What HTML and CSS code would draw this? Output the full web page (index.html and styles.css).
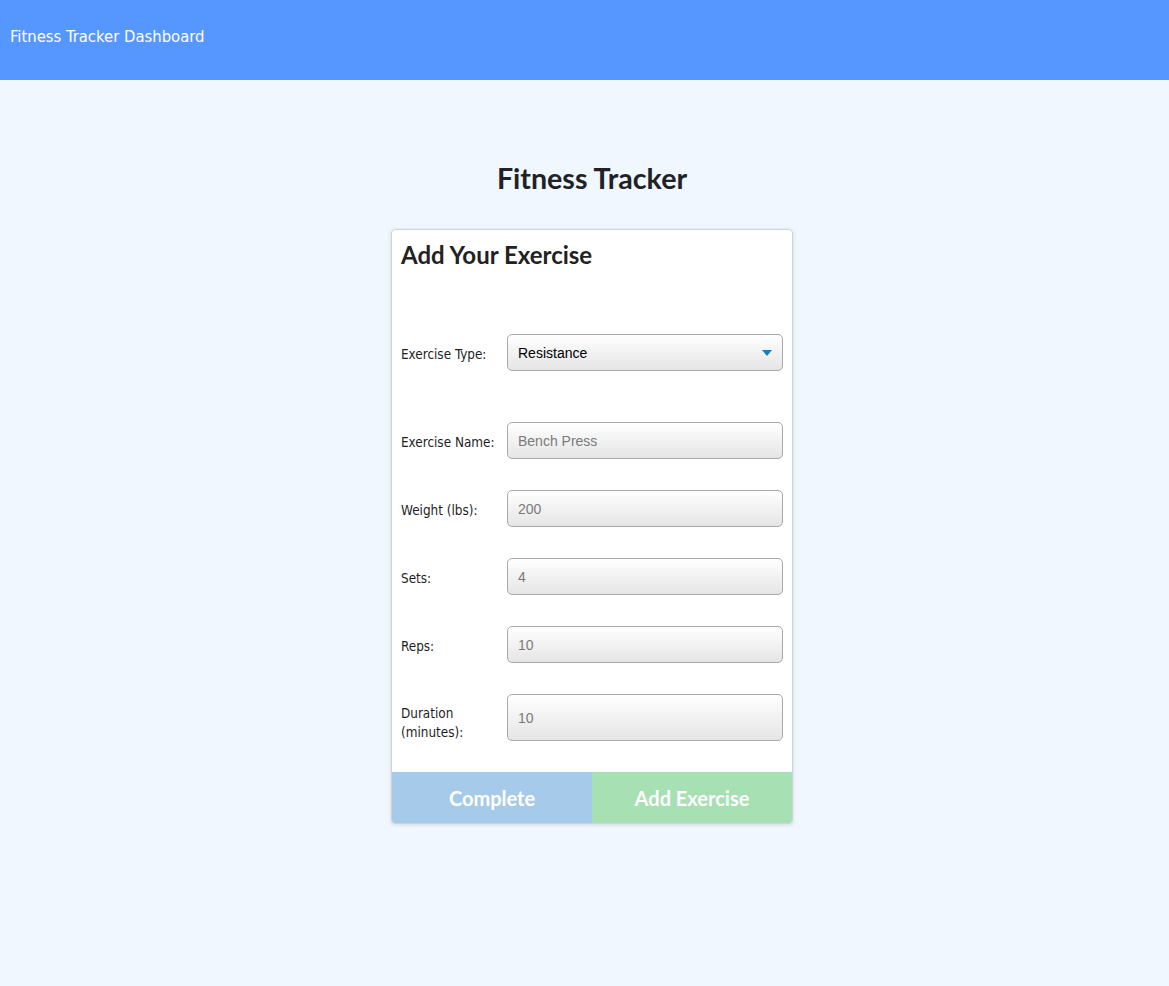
FILE: index.html
```html
<!DOCTYPE html>
<html lang="en">
<head>
<meta charset="utf-8">
<title>Fitness Tracker Dashboard</title>
<link rel="stylesheet" href="styles.css">
</head>
<body>
<header class="topbar">
  <span class="brand">Fitness Tracker Dashboard</span>
</header>
<main class="content">
  <h1 class="title">Fitness Tracker</h1>
  <section class="card">
    <h2 class="card-title">Add Your Exercise</h2>
    <form class="form">
      <div class="row row-type">
        <label class="label">Exercise Type:</label>
        <div class="select">
          <span class="select-value">Resistance</span>
          <svg class="caret" width="10" height="6" viewBox="0 0 10 6"><path d="M0 0H10L5 6Z" fill="#0b7fc7"/></svg>
        </div>
      </div>
      <div class="row">
        <label class="label">Exercise Name:</label>
        <input class="field" type="text" placeholder="Bench Press">
      </div>
      <div class="row">
        <label class="label">Weight (lbs):</label>
        <input class="field" type="text" placeholder="200">
      </div>
      <div class="row">
        <label class="label">Sets:</label>
        <input class="field" type="text" placeholder="4">
      </div>
      <div class="row">
        <label class="label">Reps:</label>
        <input class="field" type="text" placeholder="10">
      </div>
      <div class="row row-last">
        <label class="label label-wrap">Duration (minutes):</label>
        <input class="field field-tall" type="text" placeholder="10">
      </div>
    </form>
    <div class="actions">
      <button class="btn btn-complete" type="button">Complete</button>
      <button class="btn btn-add" type="button">Add Exercise</button>
    </div>
  </section>
</main>
</body>
</html>
```
FILE: styles.css
```css
* { box-sizing: border-box; }
html, body { margin: 0; padding: 0; }
body {
  background: #f0f7ff;
  min-height: 986px;
  font-family: "DejaVu Sans", sans-serif;
}
.topbar {
  height: 80px;
  background: #5596ff;
  padding: 27px 10px 0;
}
.brand {
  color: #ffffff;
  font-family: "DejaVu Sans Condensed", "DejaVu Sans", sans-serif;
  font-size: 16.5px;
  line-height: 20px;
}
.content {
  display: flex;
  flex-direction: column;
  align-items: center;
  padding-top: 79px;
  padding-left: 15px;
}
.title {
  margin: 0;
  font-family: Lato, sans-serif;
  font-weight: 700;
  font-size: 28.6px;
  line-height: 38px;
  color: #212226;
}
.card {
  margin-top: 32px;
  width: 402px;
  background: #fff;
  border: 1px solid #cfd3d8;
  border-radius: 4px;
  box-shadow: 0 1px 4px rgba(0,0,0,0.12);
  overflow: hidden;
}
.card-title {
  margin: 10px 9px 0;
  font-family: Lato, sans-serif;
  font-weight: 700;
  font-size: 24px;
  line-height: 29px;
  color: #222;
}
.form {
  padding: 65px 9px 31px 9px;
  display: flex;
  flex-direction: column;
  gap: 31px;
}
.row {
  display: flex;
  align-items: center;
}
.row-type { margin-bottom: 20px; }
.label {
  width: 106px;
  flex: none;
  font-family: "DejaVu Sans Condensed", "DejaVu Sans", sans-serif;
  font-size: 13.4px;
  line-height: 19px;
  color: #1e1e1e;
  padding-right: 8px;
  padding-top: 3px;
}
.label-wrap {
  align-self: flex-start;
  height: 47px;
  padding-top: 10px;
}
.field, .select {
  flex: 1;
  height: 37px;
  border: 1px solid #a9a9a9;
  border-radius: 5px;
  background: linear-gradient(#ffffff, #e5e5e5);
  padding: 0 10px;
  font-family: "Liberation Sans", Arial, sans-serif;
  font-size: 14px;
  color: #000;
  outline: none;
}
.field::placeholder { color: #7a7a7a; }
.field-tall { height: 47px; }
.select {
  display: flex;
  align-items: center;
  justify-content: space-between;
}
.actions {
  display: flex;
}
.btn {
  flex: 1;
  height: 51px;
  border: 0;
  margin: 0;
  color: #fff;
  font-family: Lato, sans-serif;
  font-weight: 700;
  font-size: 20px;
  cursor: pointer;
}
.btn-complete { background: #a6cbea; }
.btn-add { background: #a6e0b3; }
```
